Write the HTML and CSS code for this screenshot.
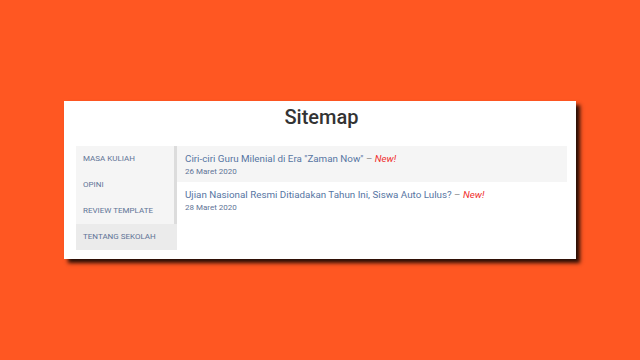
FILE: index.html
```html
<!DOCTYPE html>
<html lang="id">
<head>
    <meta charset="UTF-8">
    <meta name="viewport" content="width=device-width, initial-scale=1.0">
    <title>Sitemap</title>
    <link rel="stylesheet" href="styles.css">
</head>
<body>
    <div class="card">
        <h1>Sitemap</h1>
        <div class="sitemap">
            <ul class="tabs">
                <li>Masa Kuliah</li>
                <li>Opini</li>
                <li>Review Template</li>
                <li class="active">Tentang Sekolah</li>
            </ul>
            <div class="posts">
                <div class="post first">
                    <a href="#">Ciri-ciri Guru Milenial di Era "Zaman Now"</a> &ndash; <em>New!</em>
                    <div class="date">26 Maret 2020</div>
                </div>
                <div class="post">
                    <a href="#">Ujian Nasional Resmi Ditiadakan Tahun Ini, Siswa Auto Lulus?</a> &ndash; <em>New!</em>
                    <div class="date">28 Maret 2020</div>
                </div>
            </div>
        </div>
    </div>
</body>
</html>
```

FILE: styles.css
```css
* {
    margin: 0;
    padding: 0;
    box-sizing: border-box;
    font-family: Roboto, "Liberation Sans", sans-serif;
}

body {
    width: 640px;
    height: 360px;
    background: #FF5722;
    display: flex;
    justify-content: center;
    align-items: center;
}

.card {
    width: 512px;
    height: 158px;
    background: #fff;
    box-shadow: 4px 4px 4px rgba(0,0,0,0.85);
    padding: 0 9px 0 12px;
}

h1 {
    text-align: center;
    color: #333;
    font-size: 20px;
    font-weight: 500;
    line-height: 30px;
    padding-top: 1px;
    margin-bottom: 14px;
}

.sitemap {
    display: flex;
}

.tabs {
    list-style: none;
    width: 101px;
    background: #f5f5f5;
}

.tabs li {
    height: 26px;
    line-height: 26px;
    padding-left: 7px;
    font-size: 8px;
    text-transform: uppercase;
    color: #5f7497;
    border-right: 3px solid #dcdcdc;
}

.tabs li.active {
    background: #ebebeb;
    border-right-color: #ebebeb;
}

.posts {
    flex: 1;
}

.post {
    padding: 6px 8px 0;
    font-size: 9.8px;
    line-height: 13px;
    color: #888;
    height: 36px;
}

.post.first {
    background: #f5f5f5;
}

.post a {
    color: #5776a3;
    text-decoration: none;
}

.post em {
    color: #f0302e;
}

.date {
    font-size: 8px;
    line-height: 10px;
    color: #5f7497;
    margin-top: 2px;
}
```
